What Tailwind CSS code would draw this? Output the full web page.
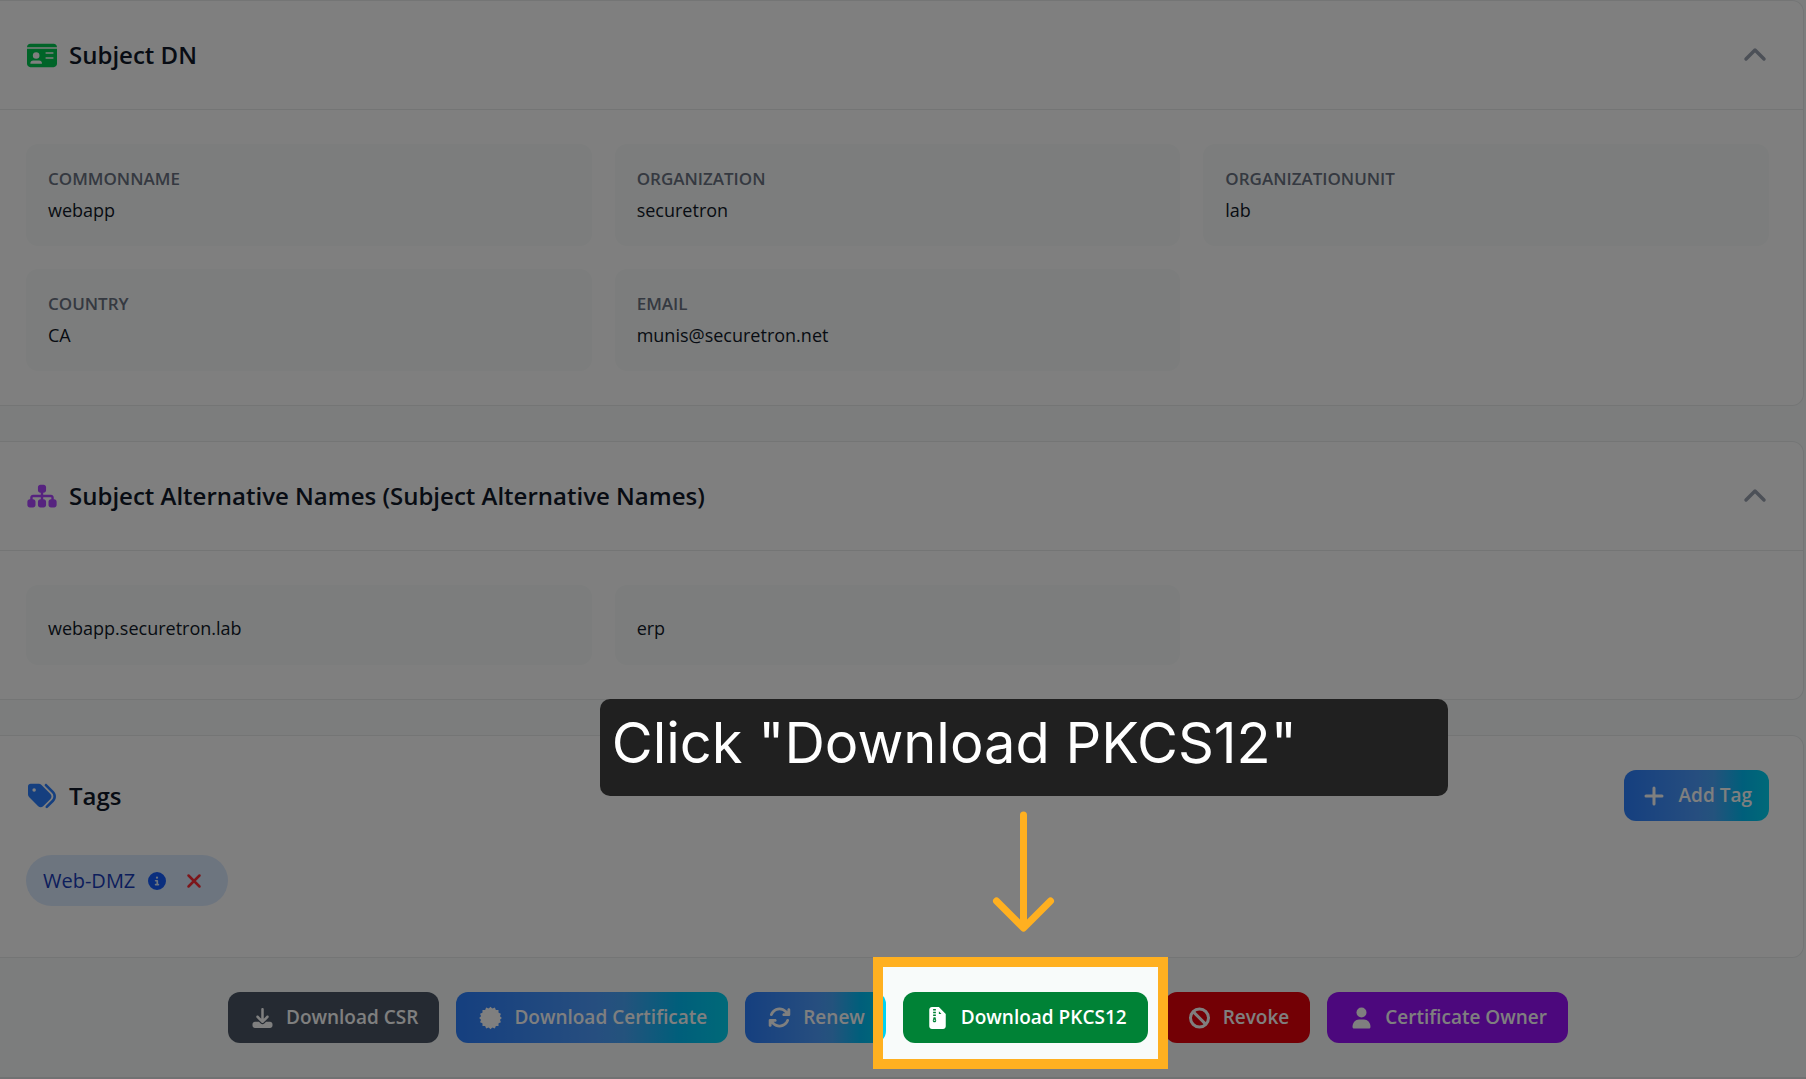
<!DOCTYPE html>
<html lang="en">
<head>
<meta charset="utf-8">
<meta name="viewport" content="width=device-width, initial-scale=1">
<title>Certificate details</title>
<script src="https://cdn.jsdelivr.net/npm/@tailwindcss/browser@4"></script>
</head>
<body class="relative min-h-screen overflow-hidden bg-[#f8fbfa] font-['Open_Sans','Noto_Sans',sans-serif] text-gray-900">

<main class="flex flex-col gap-[35px] pr-[2px]">

  <!-- Subject DN -->
  <section class="rounded-r-xl border-y border-r border-[#e8eaeb] bg-white">
    <header class="flex h-[109px] items-center justify-between border-b border-[#e8eaeb] pr-9 pl-[27px]">
      <h2 class="flex items-center gap-3 text-[24px] leading-8 font-semibold">
        <svg class="w-[30px] h-[27px] text-green-500" viewBox="0 0 576 512" fill="currentColor" aria-hidden="true"><path d="M0 96l576 0c0-35.3-28.7-64-64-64L64 32C28.7 32 0 60.7 0 96zm0 32L0 416c0 35.3 28.7 64 64 64l448 0c35.3 0 64-28.7 64-64l0-288L0 128zM64 405.3c0-29.5 23.9-53.3 53.3-53.3l117.3 0c29.5 0 53.3 23.9 53.3 53.3c0 5.9-4.8 10.7-10.7 10.7L74.7 416c-5.9 0-10.7-4.8-10.7-10.7zM176 192a64 64 0 1 1 0 128 64 64 0 1 1 0-128zm176 16c0-8.800 7.200-16 16-16l128 0c8.800 0 16 7.200 16 16s-7.200 16-16 16l-128 0c-8.800 0-16-7.200-16-16zm0 96c0-8.800 7.200-16 16-16l128 0c8.800 0 16 7.200 16 16s-7.200 16-16 16l-128 0c-8.800 0-16-7.200-16-16z"/></svg>
        Subject DN
      </h2>
      <button type="button" aria-label="Collapse Subject DN" class="text-gray-400">
        <svg class="w-6 h-6" viewBox="0 0 24 24" fill="none" stroke="currentColor" stroke-width="3.500" stroke-linecap="round" stroke-linejoin="round"><path d="M3 16l9-9 9 9"/></svg>
      </button>
    </header>
    <dl class="grid grid-cols-3 gap-[23px] py-[34px] pr-[34px] pl-[26px]">
      <div class="rounded-xl bg-[#f8fbfa] p-[22px]">
        <dt class="text-[17px] leading-[26px] font-semibold text-gray-500">COMMONNAME</dt>
        <dd class="mt-1 text-[18px] leading-7">webapp</dd>
      </div>
      <div class="rounded-xl bg-[#f8fbfa] p-[22px]">
        <dt class="text-[17px] leading-[26px] font-semibold text-gray-500">ORGANIZATION</dt>
        <dd class="mt-1 text-[18px] leading-7">securetron</dd>
      </div>
      <div class="rounded-xl bg-[#f8fbfa] p-[22px]">
        <dt class="text-[17px] leading-[26px] font-semibold text-gray-500">ORGANIZATIONUNIT</dt>
        <dd class="mt-1 text-[18px] leading-7">lab</dd>
      </div>
      <div class="rounded-xl bg-[#f8fbfa] p-[22px]">
        <dt class="text-[17px] leading-[26px] font-semibold text-gray-500">COUNTRY</dt>
        <dd class="mt-1 text-[18px] leading-7">CA</dd>
      </div>
      <div class="rounded-xl bg-[#f8fbfa] p-[22px]">
        <dt class="text-[17px] leading-[26px] font-semibold text-gray-500">EMAIL</dt>
        <dd class="mt-1 text-[18px] leading-7">munis@securetron.net</dd>
      </div>
    </dl>
  </section>

  <!-- Subject Alternative Names -->
  <section class="rounded-r-xl border-y border-r border-[#e8eaeb] bg-white">
    <header class="flex h-[109px] items-center justify-between border-b border-[#e8eaeb] pr-9 pl-[27px]">
      <h2 class="flex items-center gap-3 text-[24px] leading-8 font-semibold">
        <svg class="w-[30px] h-[26px] text-purple-500" viewBox="0 0 576 512" fill="currentColor" aria-hidden="true"><path d="M208 80c0-26.5 21.5-48 48-48l64 0c26.5 0 48 21.5 48 48l0 64c0 26.5-21.5 48-48 48l-8 0 0 40 152 0c30.900 0 56 25.100 56 56l0 32 8 0c26.5 0 48 21.5 48 48l0 64c0 26.5-21.5 48-48 48l-64 0c-26.5 0-48-21.5-48-48l0-64c0-26.5 21.5-48 48-48l8 0 0-32c0-4.4-3.6-8-8-8l-152 0 0 40 8 0c26.5 0 48 21.5 48 48l0 64c0 26.5-21.5 48-48 48l-64 0c-26.5 0-48-21.5-48-48l0-64c0-26.5 21.5-48 48-48l8 0 0-40-152 0c-4.4 0-8 3.6-8 8l0 32 8 0c26.5 0 48 21.5 48 48l0 64c0 26.5-21.5 48-48 48l-64 0c-26.5 0-48-21.5-48-48l0-64c0-26.5 21.5-48 48-48l8 0 0-32c0-30.9 25.1-56 56-56l152 0 0-40-8 0c-26.5 0-48-21.5-48-48l0-64z"/></svg>
        Subject Alternative Names (Subject Alternative Names)
      </h2>
      <button type="button" aria-label="Collapse Subject Alternative Names" class="text-gray-400">
        <svg class="w-6 h-6" viewBox="0 0 24 24" fill="none" stroke="currentColor" stroke-width="3.500" stroke-linecap="round" stroke-linejoin="round"><path d="M3 16l9-9 9 9"/></svg>
      </button>
    </header>
    <ul class="grid grid-cols-3 gap-[23px] py-[34px] pr-[34px] pl-[26px] text-[18px] leading-7">
      <li class="rounded-xl bg-[#f8fbfa] px-[22px] pt-[29px] pb-[23px]">webapp.securetron.lab</li>
      <li class="rounded-xl bg-[#f8fbfa] px-[22px] pt-[29px] pb-[23px]">erp</li>
    </ul>
  </section>

  <!-- Tags -->
  <section class="rounded-r-xl border-y border-r border-[#e8eaeb] bg-white pt-[34px] pr-[34px] pb-[51px] pl-[26px]">
    <div class="flex items-center justify-between">
      <h2 class="flex items-center gap-3 pl-px text-[24px] leading-8 font-semibold">
        <svg class="w-[30px] h-7 text-blue-500" viewBox="0 0 512 512" fill="currentColor" aria-hidden="true"><path d="M345 39.1L472.8 168.4c52.4 53 52.4 138.2 0 191.2L360.8 472.9c-9.3 9.4-24.5 9.5-33.9 .2s-9.5-24.5-.2-33.9L438.6 325.9c33.9-34.3 33.9-89.4 0-123.7L310.9 72.9c-9.3-9.4-9.2-24.6 .2-33.9s24.6-9.2 33.9 .2zM0 229.5L0 80C0 53.5 21.5 32 48 32l149.5 0c17 0 33.3 6.7 45.3 18.7l168 168c25 25 25 65.5 0 90.5L277.3 442.7c-25 25-65.5 25-90.5 0l-168-168C6.7 262.7 0 246.5 0 229.5zM144 144a32 32 0 1 0 -64 0 32 32 0 1 0 64 0z"/></svg>
        Tags
      </h2>
      <button type="button" class="flex h-[51px] items-center gap-3 rounded-xl bg-[linear-gradient(90deg,#2b7fff,#4d9cff_50%,#48a6fa_62%,#00bef6_82%,#00d3f2)] px-[17px] text-[19px] font-semibold text-white">
        <svg class="w-[26px] h-5" viewBox="0 0 26 20" fill="none" stroke="currentColor" stroke-width="3" stroke-linecap="round" aria-hidden="true"><path d="M13 2v16M5 10h16"/></svg>
        Add Tag
      </button>
    </div>
    <div class="mt-[34px] flex">
      <div class="flex h-[51px] items-center rounded-full bg-blue-100 pr-[26px] pl-[17px] text-[20px] font-medium text-blue-800">
        Web-DMZ
        <button type="button" aria-label="Tag info" class="ml-[13px] text-blue-600">
          <svg class="w-[18px] h-[18px]" viewBox="0 0 512 512" fill="currentColor"><path d="M256 512A256 256 0 1 0 256 0a256 256 0 1 0 0 512zM216 336l24 0 0-64-24 0c-13.3 0-24-10.7-24-24s10.7-24 24-24l48 0c13.3 0 24 10.7 24 24l0 88 8 0c13.3 0 24 10.7 24 24s-10.7 24-24 24l-80 0c-13.3 0-24-10.7-24-24s10.7-24 24-24zm40-208a32 32 0 1 1 0 64 32 32 0 1 1 0-64z"/></svg>
        </button>
        <button type="button" aria-label="Remove tag Web-DMZ" class="ml-5 text-red-500">
          <svg class="w-4 h-4" viewBox="0 0 16 16" fill="none" stroke="currentColor" stroke-width="2.500" stroke-linecap="round"><path d="M2.500 2.500l11 11M13.500 2.500l-11 11"/></svg>
        </button>
      </div>
    </div>
  </section>
</main>

<!-- Certificate actions -->
<div class="flex flex-wrap items-center justify-center gap-[17px] border-b-2 border-[#e2e4e6] py-[34px] pr-9 pl-[26px] text-[19px] font-semibold text-white">
  <button type="button" class="flex h-[51px] items-center gap-[10px] rounded-xl bg-gray-600 px-[21px]">
    <svg class="w-[27px] h-5" viewBox="0 0 512 512" fill="currentColor" aria-hidden="true"><path d="M288 32c0-17.700-14.300-32-32-32s-32 14.300-32 32l0 242.700-73.400-73.400c-12.500-12.500-32.800-12.500-45.300 0s-12.500 32.800 0 45.300l128 128c12.500 12.500 32.800 12.500 45.300 0l128-128c12.500-12.500 12.500-32.800 0-45.300s-32.800-12.500-45.300 0L288 274.700 288 32zM64 352c-35.300 0-64 28.700-64 64l0 32c0 35.300 28.700 64 64 64l384 0c35.300 0 64-28.700 64-64l0-32c0-35.300-28.700-64-64-64l-101.500 0-45.300 45.300c-25 25-65.500 25-90.500 0L165.500 352 64 352z"/></svg>
    Download CSR
  </button>
  <button type="button" class="flex h-[51px] items-center gap-[10px] rounded-xl bg-[linear-gradient(90deg,#2b7fff,#4d9cff_50%,#48a6fa_62%,#00bef6_82%,#00d3f2)] px-[21px]">
    <svg class="w-[27px] h-6" viewBox="0 0 24 24" fill="currentColor" aria-hidden="true"><rect x="4" y="4" width="16" height="16"/><rect x="4" y="4" width="16" height="16" transform="rotate(22.5 12 12)"/><rect x="4" y="4" width="16" height="16" transform="rotate(45 12 12)"/><rect x="4" y="4" width="16" height="16" transform="rotate(67.5 12 12)"/></svg>
    Download Certificate
  </button>
  <button type="button" class="flex h-[51px] items-center gap-[10px] rounded-xl bg-[linear-gradient(90deg,#2b7fff,#4d9cff_50%,#48a6fa_62%,#00bef6_82%,#00d3f2)] px-[21px]">
    <svg class="w-[27px] h-[23px]" viewBox="0 0 512 512" fill="currentColor" aria-hidden="true"><path d="M105.100 202.600c7.700-21.800 20.200-42.300 37.800-59.800c62.500-62.500 163.800-62.500 226.300 0L386.300 160 352 160c-17.700 0-32 14.300-32 32s14.300 32 32 32l111.900 0c17.700 0 32-14.300 32-32l0-112c0-17.700-14.300-32-32-32s-32 14.300-32 32l0 35.200L414.400 97.600c-87.500-87.500-229.300-87.500-316.800 0C73.200 122 55.600 150.700 44.800 181.400c-5.900 16.700 2.900 34.900 19.500 40.800s34.900-2.900 40.800-19.500zM39 289.300c-5 1.500-9.800 4.200-13.700 8.200c-4 4-6.700 8.800-8.100 14c-.3 1.200-.6 2.500-.8 3.800c-.3 1.700-.4 3.400-.4 5.100L16 432c0 17.700 14.300 32 32 32s32-14.300 32-32l0-35.100 17.600 17.500c87.500 87.400 229.300 87.400 316.700 0c24.400-24.400 42.100-53.100 52.900-83.800c5.900-16.700-2.900-34.900-19.500-40.800s-34.900 2.900-40.800 19.500c-7.700 21.800-20.200 42.300-37.800 59.800c-62.500 62.500-163.800 62.500-226.300 0l-.1-.1L125.600 352l34.400 0c17.700 0 32-14.300 32-32s-14.300-32-32-32L48.400 288c-1.600 0-3.200 .1-4.800 .3s-3.100 .5-4.600 1z"/></svg>
    Renew
  </button>

  <!-- Highlighted step of the walkthrough -->
  <div class="relative">
    <button type="button" class="flex h-[51px] items-center gap-[10px] rounded-xl bg-green-700 px-[21px]">
      <svg class="w-[27px] h-[22px]" viewBox="0 0 384 512" fill="currentColor" fill-rule="evenodd" aria-hidden="true"><path d="M64 0C28 0 0 28 0 64v384c0 36 28 64 64 64h256c36 0 64-28 64-64V160L224 0zM224 100v60h60zM90 48h64v34H90zM90 112h64v34H90zM90 176h64v34H90zM100 240h46l16 72c0 28-18 44-40 44s-40-16-40-44zM104 296h36v24h-36z"/></svg>
      Download PKCS12
    </button>
    <div class="pointer-events-none absolute -top-[35px] -right-5 -bottom-[26px] -left-[30px] z-10 border-10 border-[#ffb020] shadow-[0_0_0_3000px_rgba(0,0,0,0.5)]"></div>
    <div class="pointer-events-none absolute bottom-[111px] -left-[303px] z-20 flex w-[848px] flex-col items-center gap-[15px]">
      <p role="status" class="w-full rounded-[10px] bg-[#1f1f1f]/98 px-3 pt-1 pb-[13px] font-['Inter',sans-serif] text-[56px] leading-[80px] font-normal text-white">Click "Download PKCS12"</p>
      <svg class="w-16 h-[121px]" viewBox="0 0 64 121" fill="none" stroke="#ffb020" stroke-width="7" stroke-linecap="round" stroke-linejoin="round" aria-hidden="true"><path d="M31.500 4v111M4.500 90l27 27 27-27"/></svg>
    </div>
  </div>

  <button type="button" class="flex h-[51px] items-center gap-[10px] rounded-xl bg-red-600 px-[21px]">
    <svg class="w-[27px] h-[22px]" viewBox="0 0 22 22" fill="none" stroke="currentColor" stroke-width="3" aria-hidden="true"><circle cx="11" cy="11" r="9"/><path d="M4.600 4.600l12.800 12.800"/></svg>
    Revoke
  </button>
  <button type="button" class="flex h-[51px] items-center gap-[10px] rounded-xl bg-purple-600 px-[21px]">
    <svg class="w-[27px] h-[22px]" viewBox="0 0 20 22" fill="currentColor" aria-hidden="true"><circle cx="10" cy="5.500" r="5"/><path d="M1 20c0-4.500 3-7.500 6.500-7.500h5c3.500 0 6.500 3 6.500 7.500 0 .8-.6 1.500-1.500 1.500h-15C1.600 21.500 1 20.800 1 20z"/></svg>
    Certificate Owner
  </button>
</div>

</body>
</html>
